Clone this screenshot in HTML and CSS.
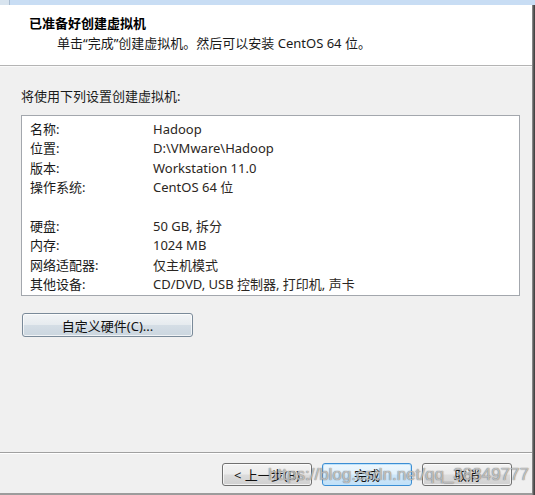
FILE: index.html
```html
<!DOCTYPE html>
<html lang="zh-CN">
<head>
<meta charset="utf-8">
<title>新建虚拟机向导</title>
<link rel="stylesheet" href="styles.css">
</head>
<body>
<div class="window">
  <div class="titlebar"><span class="app-icon"></span></div>
  <div class="frame">
    <div class="dialog">
      <div class="header">
        <div class="title">已准备好创建虚拟机</div>
        <div class="subtitle">单击“完成”创建虚拟机。然后可以安装 CentOS 64 位。</div>
      </div>
      <div class="content">
        <div class="intro">将使用下列设置创建虚拟机:</div>
        <div class="summary">
          <div class="row"><span class="label">名称:</span><span class="value">Hadoop</span></div>
          <div class="row"><span class="label">位置:</span><span class="value">D:\VMware\Hadoop</span></div>
          <div class="row"><span class="label">版本:</span><span class="value">Workstation 11.0</span></div>
          <div class="row"><span class="label">操作系统:</span><span class="value">CentOS 64 位</span></div>
          <div class="row"></div>
          <div class="row"><span class="label">硬盘:</span><span class="value">50 GB, 拆分</span></div>
          <div class="row"><span class="label">内存:</span><span class="value">1024 MB</span></div>
          <div class="row"><span class="label">网络适配器:</span><span class="value">仅主机模式</span></div>
          <div class="row"><span class="label">其他设备:</span><span class="value">CD/DVD, USB 控制器, 打印机, 声卡</span></div>
        </div>
        <button class="btn btn-custom">自定义硬件(C)...</button>
      </div>
      <div class="footer">
        <button class="btn btn-nav">&lt; 上一步(B)</button>
        <button class="btn btn-nav btn-default">完成</button>
        <button class="btn btn-nav">取消</button>
        <div class="watermark">https://blog.csdn.net/qq_38349777</div>
      </div>
    </div>
    <div class="edge"></div>
  </div>
</div>
</body>
</html>
```
FILE: styles.css
```css
html, body {
  margin: 0;
  padding: 0;
}
body {
  width: 535px;
  height: 495px;
  overflow: hidden;
  background: #f0f0f0;
  font-family: "Noto Sans", "Noto Sans CJK SC", sans-serif;
  font-size: 13px;
  color: #1e1e1e;
}
.window {
  width: 535px;
  height: 495px;
  display: flex;
  flex-direction: column;
}
.titlebar {
  height: 5px;
  background: #c8ddf4;
  display: flex;
  flex-shrink: 0;
}
.app-icon {
  width: 9px;
  height: 5px;
  background: #d8e4ef;
  border-right: 1px solid #a9bcd0;
}
.frame {
  flex: 1;
  display: flex;
  min-height: 0;
}
.dialog {
  flex: 1;
  display: flex;
  flex-direction: column;
  min-width: 0;
}
.edge {
  width: 3px;
  background: linear-gradient(to right, #9a9a9a, #505050 60%, #3c3c3c);
}
.header {
  height: 61px;
  background: #ffffff;
  border-bottom: 1px solid #b4b4b4;
  padding: 10px 0 0 29px;
  box-sizing: border-box;
  flex-shrink: 0;
}
.title {
  font-weight: bold;
  font-size: 13px;
  line-height: 16px;
  color: #000;
}
.subtitle {
  margin-top: 3px;
  padding-left: 28px;
  line-height: 18px;
  font-size: 13px;
  color: #1a1a1a;
}
.content {
  flex: 1;
  padding: 21px 12px 0 21px;
  border-top: 1px solid #fafafa;
}
.intro {
  line-height: 16px;
  color: #1a1a1a;
}
.summary {
  margin-top: 11px;
  background: #ffffff;
  border: 1px solid #a3a7ad;
  padding: 4px 0 0 8px;
  height: 181px;
  box-sizing: border-box;
}
.row {
  display: flex;
  height: 19.4px;
  line-height: 19.4px;
  white-space: nowrap;
}
.label {
  width: 123px;
  flex-shrink: 0;
  color: #1a1a1a;
}
.value {
  color: #2b2622;
}
.btn {
  font-family: "Noto Sans", "Noto Sans CJK SC", sans-serif;
  font-size: 13px;
  color: #111;
  border: 1px solid #7a8a99;
  border-radius: 3px;
  background: linear-gradient(to bottom, #f3f3f3 0%, #ebebeb 48%, #dcdcdc 52%, #d0d0d0 100%);
  padding: 0;
  box-shadow: inset 0 0 0 1px rgba(255,255,255,0.7);
}
.btn-custom {
  display: block;
  margin: 17px 0 0 1px;
  width: 171px;
  height: 24px;
  background: linear-gradient(to bottom, #f2f4f6 0%, #e6ebef 48%, #d4dde5 52%, #cbd6df 100%);
}
.footer {
  position: relative;
  height: 43px;
  box-sizing: border-box;
  border-top: 1px solid #a0a0a0;
  border-bottom: 2px solid #9c9c9c;
  box-shadow: inset 0 1px 0 #ffffff;
  padding: 10px 20px 0 0;
  display: flex;
  justify-content: flex-end;
  gap: 10px;
  flex-shrink: 0;
}
.btn-nav {
  width: 90px;
  height: 23px;
  border-color: #707070;
}
.btn-default {
  border-color: #3c8ed4;
  background: linear-gradient(to bottom, #eef7fd 0%, #e1f1fc 48%, #cfe8fa 52%, #c2e0f7 100%);
  box-shadow: inset 0 0 0 1px #bfe3fb;
}
.watermark {
  position: absolute;
  right: 3px;
  top: 11px;
  font-family: "Liberation Sans", sans-serif;
  font-size: 17px;
  line-height: 22px;
  color: rgba(255, 255, 255, 0.55);
  text-shadow: 0 0 1px rgba(90, 90, 90, 0.8), 0 0 1px rgba(90, 90, 90, 0.6);
  pointer-events: none;
  white-space: nowrap;
}
```
